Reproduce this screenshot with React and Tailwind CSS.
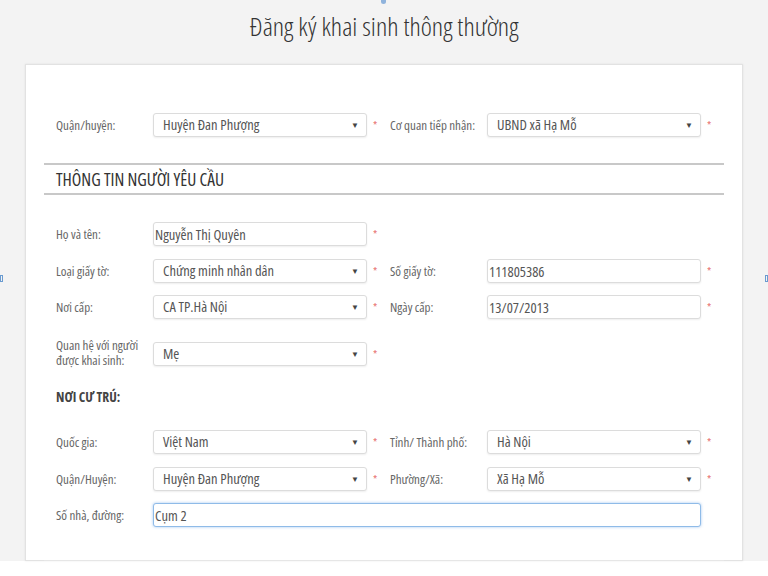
import { useState } from 'react'

const FONT = "font-['Open_Sans',sans-serif] [font-stretch:75%]"

function Star({ show = true }) {
  return (
    <span className={`w-[23px] pl-[6px] text-left text-[11px] text-[#e66a6a] ${show ? '' : 'invisible'}`}>*</span>
  )
}

function Select({ value }) {
  return (
    <div className="flex h-[24px] w-[214px] items-center rounded-[3px] border border-[#dcdcdc] bg-white pl-[9px] pr-[7px] text-[14.5px] text-[#555] shadow-[0_1px_2px_rgba(0,0,0,0.07)]">
      <span>{value}</span>
      <span className="ml-auto text-[8px] text-[#444]">▼</span>
    </div>
  )
}

function Input({ value, focused = false, wide = false }) {
  const [text, setText] = useState(value)
  return (
    <input
      value={text}
      onChange={e => setText(e.target.value)}
      className={`h-[24px] rounded-[3px] border bg-white px-[1px] text-[14.5px] text-[#555] outline-none ${FONT} ${
        wide ? 'w-[548px]' : 'w-[214px]'
      } ${focused ? 'border-[#8fbbe8] shadow-[0_0_3px_rgba(102,160,230,0.6)]' : 'border-[#dcdcdc] shadow-[0_1px_2px_rgba(0,0,0,0.07)]'}`}
    />
  )
}

function Label({ children, className = '' }) {
  return <div className={`w-[97px] text-[13px] leading-[15px] text-[#666] ${className}`}>{children}</div>
}

function Row({ left, right, className = '' }) {
  return (
    <div className={`flex items-center pl-[12px] ${className}`}>
      {left}
      {right}
    </div>
  )
}

function Field({ label, children, star = true }) {
  return (
    <>
      {typeof label === 'string' ? <Label>{label}</Label> : label}
      {children}
      <Star show={star} />
    </>
  )
}

export default function App() {
  return (
    <div className={`relative h-[576px] w-[768px] overflow-hidden bg-white ${FONT}`}>
      <div className="h-[561px] bg-[#f3f3f3] pt-[10px]">
        <div className="absolute left-[381px] top-0 h-[4px] w-[5px] rounded-b-sm bg-[#8fb3dc]" />
        <div className="absolute left-0 top-[275px] h-[7px] w-[3px] border border-[#6a9bd0]" />
        <div className="absolute right-0 top-[275px] h-[7px] w-[3px] border border-[#6a9bd0]" />

        <h1 className="text-center text-[26.5px] font-light leading-[32px] text-[#333]">Đăng ký khai sinh thông thường</h1>

        <div className="mx-[25px] mt-[22px] h-[497px] border border-[#e2e2e2] bg-white px-[18px] pt-[48px] shadow-[0_0_2px_rgba(0,0,0,0.08)]">
          <Row
            left={
              <Field label="Quận/huyện:">
                <Select value="Huyện Đan Phượng" />
              </Field>
            }
            right={
              <Field label="Cơ quan tiếp nhận:">
                <Select value="UBND xã Hạ Mỗ" />
              </Field>
            }
          />

          <div className="mt-[26px] flex h-[32px] items-center border-y-2 border-[#c8c8c8] pl-[12px] text-[17.5px] text-[#333]">
            THÔNG TIN NGƯỜI YÊU CẦU
          </div>

          <Row
            className="mt-[27px]"
            left={
              <Field label="Họ và tên:">
                <Input value="Nguyễn Thị Quyên" />
              </Field>
            }
          />
          <Row
            className="mt-[13px]"
            left={
              <Field label="Loại giấy tờ:">
                <Select value="Chứng minh nhân dân" />
              </Field>
            }
            right={
              <Field label="Số giấy tờ:">
                <Input value="111805386" />
              </Field>
            }
          />
          <Row
            className="mt-[12px]"
            left={
              <Field label="Nơi cấp:">
                <Select value="CA TP.Hà Nội" />
              </Field>
            }
            right={
              <Field label="Ngày cấp:">
                <Input value="13/07/2013" />
              </Field>
            }
          />
          <Row
            className="mt-[21px]"
            left={
              <Field label={<Label className="-mt-[2px]">Quan hệ với người được khai sinh:</Label>}>
                <Select value="Mẹ" />
              </Field>
            }
          />

          <div className="mt-[19px] pl-[12px] text-[13.5px] font-bold text-[#444]">NƠI CƯ TRÚ:</div>

          <Row
            className="mt-[23px]"
            left={
              <Field label="Quốc gia:">
                <Select value="Việt Nam" />
              </Field>
            }
            right={
              <Field label="Tỉnh/ Thành phố:">
                <Select value="Hà Nội" />
              </Field>
            }
          />
          <Row
            className="mt-[13px]"
            left={
              <Field label="Quận/Huyện:">
                <Select value="Huyện Đan Phượng" />
              </Field>
            }
            right={
              <Field label="Phường/Xã:">
                <Select value="Xã Hạ Mỗ" />
              </Field>
            }
          />
          <Row
            className="mt-[12px]"
            left={
              <Field label="Số nhà, đường:" star={false}>
                <Input value="Cụm 2" focused wide />
              </Field>
            }
          />

          <div className="mt-[33px] border-t border-[#e6e6e6]" />
        </div>
      </div>
    </div>
  )
}
